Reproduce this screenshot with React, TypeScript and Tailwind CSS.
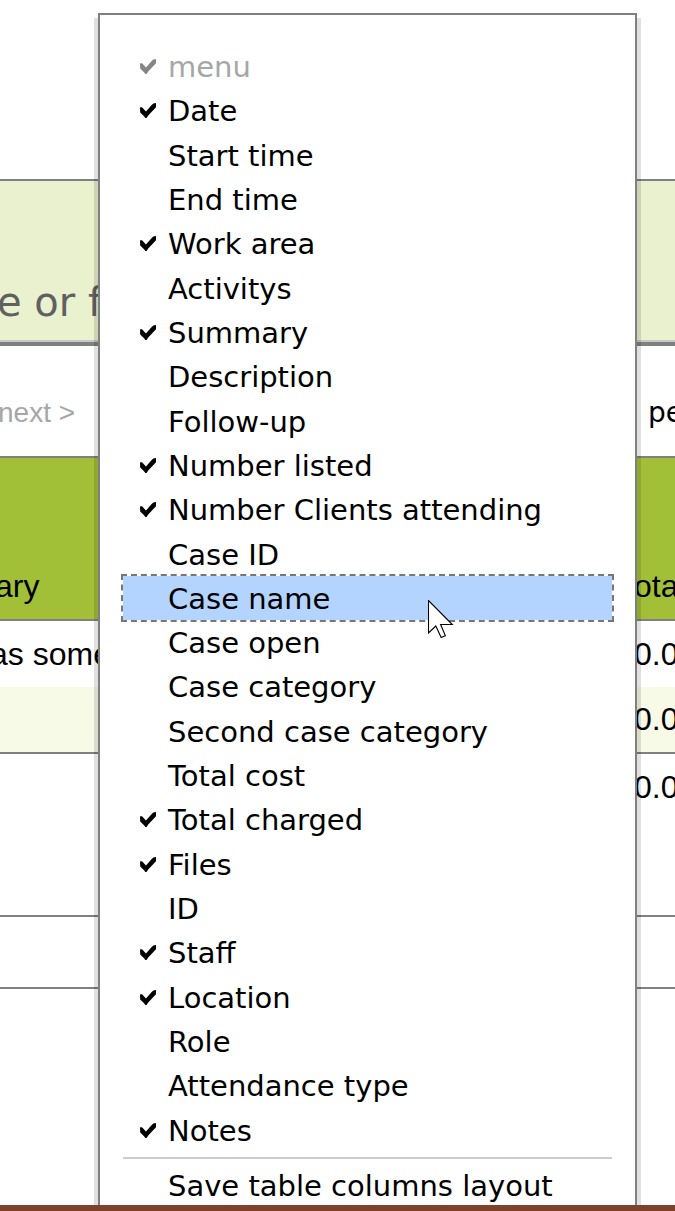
import React from "react";

type Column = { label: string; checked?: boolean; disabled?: boolean; active?: boolean };

const columns: Column[] = [
  { label: "menu", checked: true, disabled: true },
  { label: "Date", checked: true },
  { label: "Start time" },
  { label: "End time" },
  { label: "Work area", checked: true },
  { label: "Activitys" },
  { label: "Summary", checked: true },
  { label: "Description" },
  { label: "Follow-up" },
  { label: "Number listed", checked: true },
  { label: "Number Clients attending", checked: true },
  { label: "Case ID" },
  { label: "Case name", active: true },
  { label: "Case open" },
  { label: "Case category" },
  { label: "Second case category" },
  { label: "Total cost" },
  { label: "Total charged", checked: true },
  { label: "Files", checked: true },
  { label: "ID" },
  { label: "Staff", checked: true },
  { label: "Location", checked: true },
  { label: "Role" },
  { label: "Attendance type" },
  { label: "Notes", checked: true },
];

function CheckMark() {
  return (
    <svg
      viewBox="0 0 16 16"
      aria-hidden="true"
      className="pointer-events-none col-start-1 row-start-1 size-4 opacity-0 peer-checked:opacity-100"
    >
      <path
        d="M0 4.6C1.4 3.8 2.6 4.4 3.6 6L6 8.6L11.2 2.6C12.6 0.8 14 0 16 0V4.2L8.2 12.6L6.6 15H5.4L3.8 12.9L0.2 9.6Z"
        fill="currentColor"
      />
    </svg>
  );
}

function MenuItem({ label, checked, disabled, active }: Column) {
  return (
    <li className="grid">
      <label
        className={
          "flex h-11 items-center gap-3 pt-0.5 pl-[17px] leading-[42px] whitespace-nowrap " +
          (disabled ? "text-[#a6a6a6] " : "text-black ") +
          (active ? "relative bg-[#b3d4ff] outline-2 outline-dashed outline-[#777777]" : "")
        }
      >
        <span className={"grid size-4 " + (disabled ? "text-[#858585]" : "")}>
          <input
            type="checkbox"
            defaultChecked={checked}
            disabled={disabled}
            className="peer col-start-1 row-start-1 size-4 appearance-none outline-none"
          />
          <CheckMark />
        </span>
        {label}
      </label>
    </li>
  );
}

function Pointer() {
  return (
    <svg viewBox="0 0 27 40" aria-hidden="true" className="pointer-events-none absolute top-[585px] left-[328px] h-10 w-[27px]">
      <path
        d="M0.5 0.5V33L7.8 26L13.2 37.6L17.4 35.8L12.6 24.5H24.3Z"
        fill="#fff"
        stroke="#000"
        strokeWidth="1.1"
      />
    </svg>
  );
}

export default function App() {
  return (
    <div className="relative flex h-screen flex-col overflow-hidden bg-white font-['Liberation_Sans',Arial,sans-serif] text-[32px] text-black">
      <header className="mt-[179px] flex h-[167px] shrink-0 items-end border-t-2 border-b-4 border-[#808080] bg-[#eaf1cf]">
        <div className="h-[76px] w-full overflow-hidden border-b-2 border-[#c8c8c8] font-['DejaVu_Sans',Verdana,sans-serif] text-[40px] leading-[72px] text-[#606060]">
          <h1 className="-ml-[3px] whitespace-nowrap">e or f</h1>
        </div>
      </header>

      <nav className="flex h-[110px] shrink-0 items-center justify-between pt-6">
        <a href="#next" className="-ml-0.5 text-[28px] whitespace-nowrap text-[#a6a6a6]">
          next &gt;
        </a>
        <span className="w-[27px] font-['DejaVu_Sans',Verdana,sans-serif] text-[28px]">per</span>
      </nav>

      <table className="w-full shrink-0 table-fixed border-collapse text-left leading-9 whitespace-nowrap">
        <colgroup>
          <col />
          <col className="w-[41px]" />
        </colgroup>
        <thead>
          <tr className="h-[163px] border-y-2 border-[#808080] bg-[#a2c037] align-bottom">
            <th className="p-0 pb-[15px] font-normal">
              <div className="-ml-[5px]">ary</div>
            </th>
            <th className="p-0 pb-[15px] font-normal">otal</th>
          </tr>
        </thead>
        <tbody>
          <tr className="h-[67px]">
            <td className="p-0">
              <div className="-ml-2.5">as some</div>
            </td>
            <td className="p-0">0.00</td>
          </tr>
          <tr className="h-[66px] border-b-2 border-[#808080] bg-[#f7fae7]">
            <td className="p-0" />
            <td className="p-0 pb-0.5">0.00</td>
          </tr>
          <tr className="h-[163px] border-b-2 border-[#808080] align-top">
            <td className="p-0" />
            <td className="p-0 pt-[15px]">0.00</td>
          </tr>
          <tr className="h-[72px] border-b-2 border-[#808080]">
            <td className="p-0" />
            <td className="p-0" />
          </tr>
        </tbody>
      </table>

      <div className="absolute top-[13px] right-[38px] left-[98px] border-2 border-[#808080] bg-white px-[23px] pt-[29px] pb-6 font-['DejaVu_Sans',Verdana,sans-serif] text-[29px] shadow-[0_9px_0_4px_rgba(0,0,0,0.12)]">
        <ul className="grid min-h-[1108px] auto-rows-fr">
          {columns.map((column) => (
            <MenuItem key={column.label} {...column} />
          ))}
        </ul>
        <hr className="mt-[5px] mb-1 border-t-2 border-[#cccccc]" />
        <button type="button" className="block h-11 w-full pt-0.5 pl-[45px] text-left leading-[42px] whitespace-nowrap">
          Save table columns layout
        </button>
        <Pointer />
      </div>

      <footer className="relative mt-auto h-1.5 shrink-0 bg-[#80412a]" />
    </div>
  );
}
